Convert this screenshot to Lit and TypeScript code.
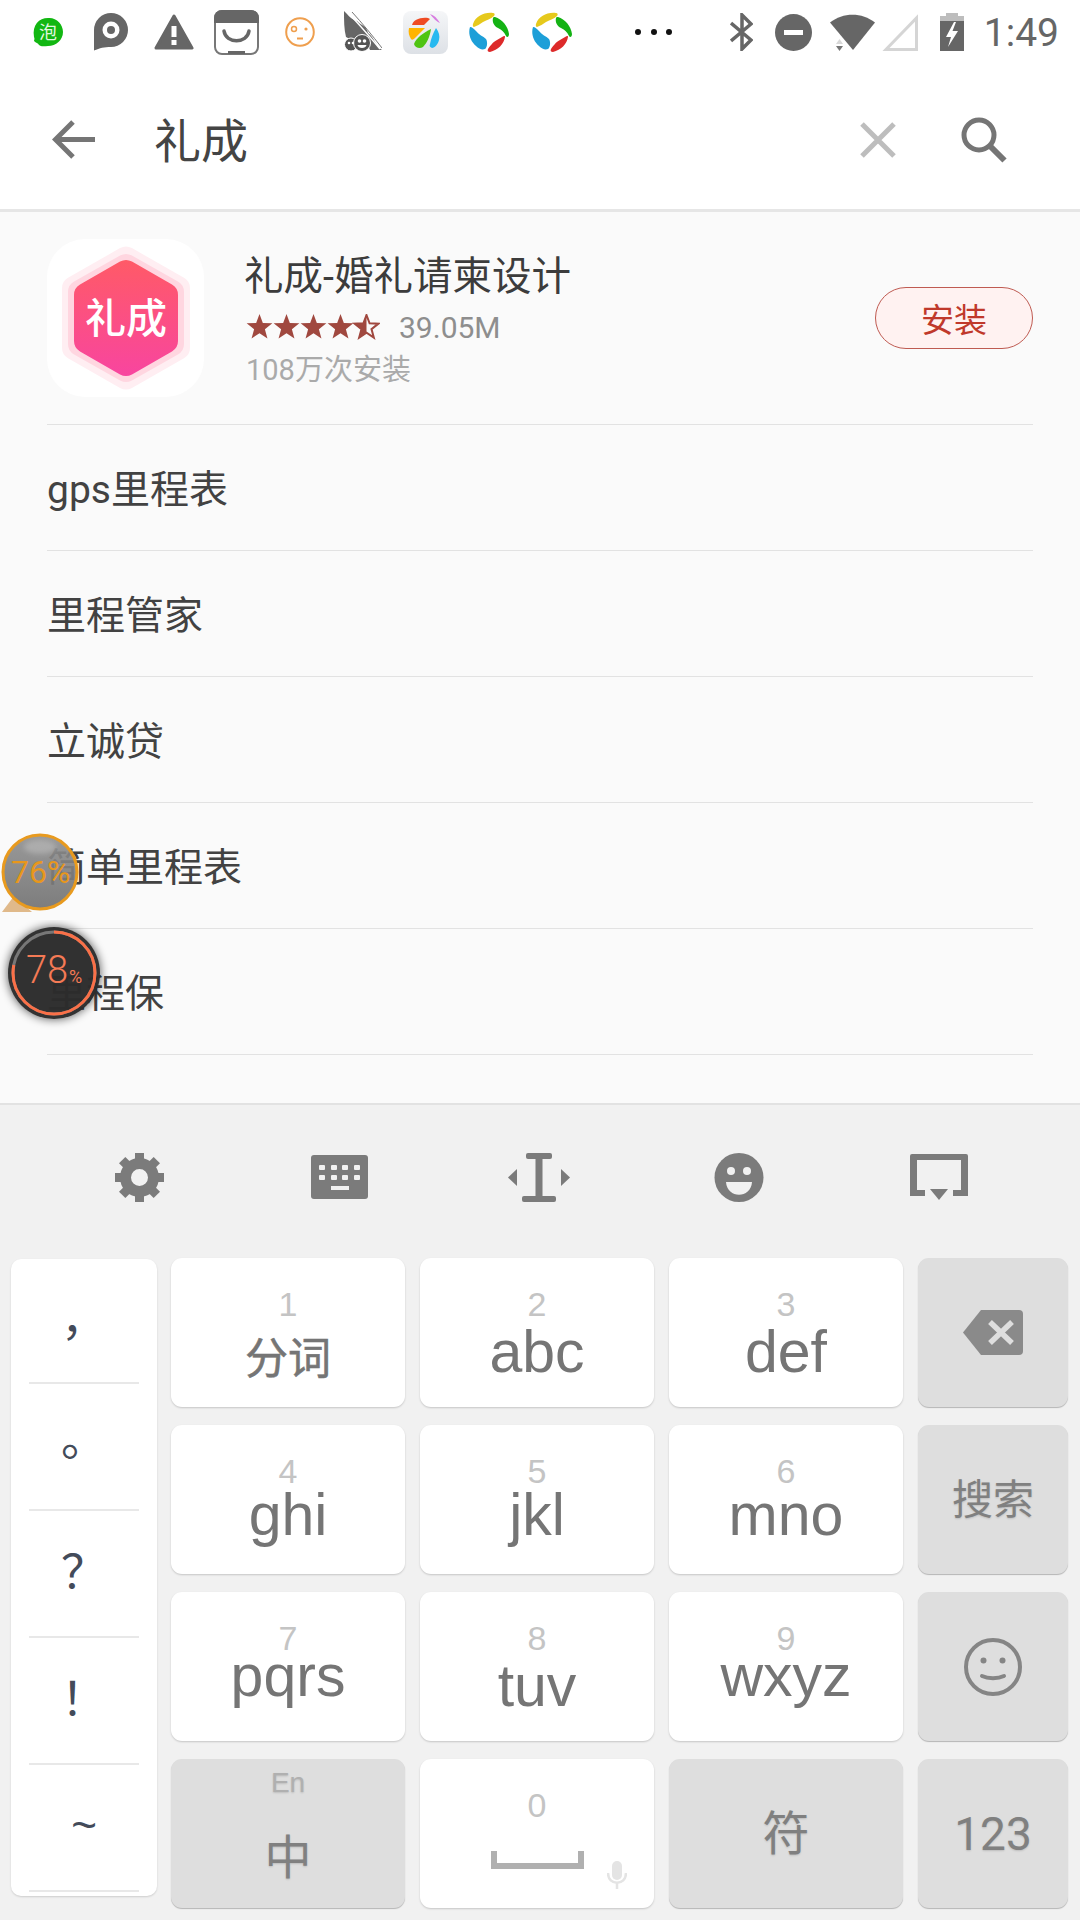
import { LitElement, html, css, svg } from 'lit';
import { customElement } from 'lit/decorators.js';

const starPoints = (cx: number, cy: number, r: number) => {
  const pts: string[] = [];
  for (let i = 0; i < 10; i++) {
    const a = -Math.PI / 2 + (i * Math.PI) / 5;
    const rad = i % 2 === 0 ? r : r * 0.42;
    pts.push(`${(cx + rad * Math.cos(a)).toFixed(2)},${(cy + rad * Math.sin(a)).toFixed(2)}`);
  }
  return pts.join(' ');
};

const rows = ['gps里程表', '里程管家', '立诚贷', '简单里程表', '里程保', '里程宝'];

const swirl = html`<svg width="40" height="40" viewBox="0 0 40 40">
  <path d="M4 12C7 4 15 0 24 1c2 0 2 2 1 3-3 3-8 4-11 6-3 2-6 4-9 5-1 0-1.500-2-1-3z" fill="#e6c91c"/>
  <path d="M26 5c7 2 13 9 14 17 0 3-2 4-3 2-2-4-4-6-8-8-4-2-6-6-5-10 0-1 1-1 2-1z" fill="#14b214"/>
  <path d="M36 25c-1 7-7 13-15 15-2 0-3-1-2-3 3-4 4-6 9-9 3-2 5-3 7-4 1 0 1 0 1 1z" fill="#dd2a2a"/>
  <path d="M1 15c2 0 4 2 6 4 3 4 7 5 10 8 2 3 1 9-1 10-3 1-6 0-9-3C1 29-1 21 1 15z" fill="#1d9fd8"/>
</svg>`;

@customElement('app-root')
export class AppRoot extends LitElement {
  static styles = css`
    :host {
      display: block;
      width: 1080px;
      height: 1920px;
      overflow: hidden;
      position: relative;
      background: #fafafa;
      font-family: Roboto, "Noto Sans CJK SC", sans-serif;
    }

    .status {
      height: 70px;
      box-sizing: border-box;
      padding: 0 21px 6px 16px;
      display: flex;
      align-items: center;
      background: #fff;
    }
    .slot {
      width: 63px;
      display: flex;
      justify-content: center;
      align-items: center;
      flex: none;
    }
    .dots {
      margin-left: 52px;
      display: flex;
      gap: 9.500px;
    }
    .dots i {
      width: 6px;
      height: 6px;
      border-radius: 50%;
      background: #111;
    }
    .sys {
      margin-left: auto;
      display: flex;
      align-items: center;
    }
    .sys svg { display: block; }
    .bt { margin-right: 22px; }
    .dnd { margin-right: 18px; }
    .wifi { margin-right: 6px; }
    .signal { margin-right: 22px; }
    .batt { margin-right: 20px; }
    .time {
      margin-top: 2px;
      font-size: 39px;
      line-height: 44px;
      color: #666;
    }

    .search {
      height: 139px;
      background: #fff;
      border-bottom: 3px solid #e6e6e6;
      display: flex;
      align-items: center;
      padding: 0 73px 0 52px;
    }
    .query {
      margin-left: 59px;
      padding-bottom: 5px;
      font-size: 47px;
      color: #444;
      flex: 1;
    }
    .clear { margin-right: 65px; }

    .list {
      height: 891px;
      overflow: hidden;
      padding: 0 47px;
    }
    .app {
      height: 213px;
      box-sizing: border-box;
      border-bottom: 1px solid #e2e2e2;
      display: flex;
      align-items: center;
    }
    .app-icon {
      width: 157px;
      height: 158px;
      border-radius: 38px;
      background: #fff;
      flex: none;
    }
    .info {
      margin-left: 40px;
      padding-top: 8px;
      display: flex;
      flex-direction: column;
    }
    .title {
      font-size: 39.500px;
      line-height: 46px;
      color: #3c3c3c;
    }
    .rating {
      margin-top: 8px;
      margin-left: 2px;
      height: 38px;
      display: flex;
      align-items: center;
    }
    .size {
      margin-left: 19px;
      font-size: 30px;
      color: #8e8e8e;
    }
    .count {
      margin-top: 4px;
      margin-left: 2px;
      font-size: 29px;
      line-height: 40px;
      color: #aaa;
    }
    .install {
      margin-left: auto;
      width: 158px;
      height: 62px;
      box-sizing: border-box;
      border: 1px solid #bf5b52;
      border-radius: 31px;
      background: #fff2f1;
      color: #c0392b;
      font-size: 33px;
      display: flex;
      align-items: center;
      justify-content: center;
    }
    .row {
      height: 126px;
      box-sizing: border-box;
      border-bottom: 1px solid #e2e2e2;
      font-size: 39px;
      color: #424242;
      display: flex;
      align-items: center;
      padding: 0 0 4px;
    }
    .row:last-child { padding: 5px 0 0; }

    .keyboard {
      height: 817px;
      box-sizing: border-box;
      border-top: 2px solid #e2e2e2;
      background: #f1f1f1;
    }
    .tools {
      height: 153px;
      box-sizing: border-box;
      padding: 0 0 9px 39px;
      display: flex;
      align-items: center;
    }
    .tool {
      width: 200px;
      display: flex;
      justify-content: center;
    }
    .keys {
      display: grid;
      grid-template-columns: 145px 234px 234px 234px 150px;
      grid-template-rows: repeat(4, 149px);
      column-gap: 15px;
      row-gap: 18px;
      padding-left: 11px;
    }
    .punct {
      grid-row: 1 / span 4;
      align-self: start;
      height: 637px;
      width: 146px;
      margin-top: 1px;
      border-radius: 10px;
      background: #fff;
      box-shadow: 0 1px 2px rgba(0, 0, 0, .15);
      display: flex;
      flex-direction: column;
      align-items: center;
    }
    .punct div {
      width: 110px;
      height: 127px;
      flex: none;
      box-sizing: border-box;
      border-bottom: 2px solid #e8e8e8;
      padding-bottom: 12px;
      display: flex;
      align-items: center;
      justify-content: center;
      font-size: 46px;
      color: #434b5a;
    }
    .punct div:first-child { height: 125px; }
    .punct .ring { padding-bottom: 24px; }
    .punct .tilde {
      padding-bottom: 6px;
      font-family: "Liberation Sans", sans-serif;
      font-size: 44px;
    }
    .key {
      position: relative;
      border-radius: 11px;
      background: #fff;
      box-shadow: 0 1px 2px rgba(0, 0, 0, .18);
      display: flex;
      flex-direction: column;
      align-items: center;
      box-sizing: border-box;
      padding-top: 29px;
      font-family: "Liberation Sans", "Noto Sans CJK SC", sans-serif;
      color: #757575;
    }
    .fn {
      background: #dedede;
      color: #808080;
      padding-top: 0;
      justify-content: center;
      box-shadow: 0 1px 1px rgba(0, 0, 0, .25);
      text-shadow: 0 1px 2px rgba(0, 0, 0, .15);
    }
    .digit {
      font-size: 34px;
      line-height: 34px;
      color: #c4c4c4;
    }
    .main {
      font-size: 59px;
      line-height: 57px;
    }
    .m3 { margin-top: 3px; }
    .m-1 { margin-top: -1px; }
    .m-7 { margin-top: -7px; }
    .cjk {
      margin-top: 17px;
      font-size: 43px;
      line-height: 42px;
      -webkit-text-stroke: .6px #757575;
    }
    .label {
      font-size: 41px;
      line-height: 44px;
    }
    .big { font-size: 47px; }
    .num {
      font-family: Roboto, sans-serif;
      font-size: 46px;
    }
    .lang {
      justify-content: flex-start;
      padding-top: 10px;
    }
    .en {
      font-size: 28px;
      line-height: 28px;
      color: #b0b0b0;
    }
    .zh {
      margin-top: 39px;
      font-size: 47px;
      line-height: 44px;
    }
    .space {
      margin-top: 29px;
      width: 93px;
      height: 18px;
      box-sizing: border-box;
      border: 6px solid #b0b0b0;
      border-top: 0;
    }
    .mic {
      position: absolute;
      right: 27px;
      bottom: 19px;
    }
    .float {
      position: absolute;
      left: 0;
    }
    .f76 { top: 830px; }
    .f78 { top: 920px; }
  `;

  render() {
    return html`
      <div class="status">
        <div class="slot">
          <svg width="32" height="30" viewBox="0 0 32 30">
            <path d="M16 1c8-1 15 6 15 14 0 8-7 14-15 14-3 0-7 1-9-1-1-2-3-2-5-4 0-1 1-2 0-4C0 8 7 1 16 1z" fill="#12b712"/>
            <text x="16" y="22" font-size="18" fill="#dff7df" text-anchor="middle" font-family="Noto Sans CJK SC">泡</text>
          </svg>
        </div>
        <div class="slot">
          <svg width="34" height="38" viewBox="0 0 34 38">
            <path d="M0 37.500V17A17 17 0 1 1 17 34C10 34 6 35 0 37.500Z" fill="#666"/>
            <circle cx="17" cy="17" r="8.500" fill="#fff"/>
            <circle cx="17" cy="17" r="4" fill="#666"/>
          </svg>
        </div>
        <div class="slot">
          <svg width="40" height="36" viewBox="0 0 40 36">
            <path d="M20 2L38 34H2Z" fill="#666" stroke="#666" stroke-width="3" stroke-linejoin="round"/>
            <rect x="17.500" y="12" width="5" height="11" fill="#fff"/>
            <rect x="17.500" y="26" width="5" height="5" fill="#fff"/>
          </svg>
        </div>
        <div class="slot">
          <svg width="45" height="45" viewBox="0 0 45 45">
            <rect x="1" y="1" width="43" height="43" rx="7" fill="#fff" stroke="#777" stroke-width="2"/>
            <path d="M8 0H37A8 8 0 0 1 45 8V13H0V8A8 8 0 0 1 8 0Z" fill="#666"/>
            <path d="M10 21C12 34 33 34 35 21" fill="none" stroke="#666" stroke-width="3.500" stroke-linecap="round"/>
            <rect x="14" y="41" width="17" height="3" fill="#666"/>
          </svg>
        </div>
        <div class="slot">
          <svg width="30" height="30" viewBox="0 0 30 30" fill="none" stroke="#ef9f4e">
            <circle cx="15" cy="15" r="13.800" stroke-width="2"/>
            <circle cx="9" cy="12" r="2.500" stroke-width="1.500"/>
            <circle cx="21" cy="12" r="1.600" fill="#ef9f4e" stroke="none"/>
            <path d="M12 21.500H18" stroke-width="2"/>
          </svg>
        </div>
        <div class="slot">
          <svg width="38" height="42" viewBox="0 0 38 42">
            <path d="M0 0C0 10 0 18 2 26L8 29H22L26 39H38C32 36 30 26 24 22 22 14 16 14 13 10 8 9 4 4 0 0Z" fill="#666"/>
            <path d="M5 3C16 14 26 26 36 38" fill="none" stroke="#fff" stroke-width="1.500"/>
            <path d="M8 1C18 12 28 24 38 37" fill="none" stroke="#777" stroke-width="1"/>
            <circle cx="7" cy="33.500" r="6.500" fill="#555" stroke="#fff" stroke-width="1"/>
            <circle cx="18" cy="32" r="8.500" fill="#555" stroke="#fff" stroke-width="1"/>
            <circle cx="5" cy="32" r="1.300" fill="#fff"/>
            <circle cx="9" cy="32" r="1.300" fill="#fff"/>
            <circle cx="15.500" cy="30" r="1.800" fill="#fff"/>
            <circle cx="20.500" cy="30" r="1.800" fill="#fff"/>
            <path d="M13.500 34H22.500C22 38 14 38 13.500 34Z" fill="#fff"/>
          </svg>
        </div>
        <div class="slot">
          <svg width="45" height="43" viewBox="0 0 45 43">
            <defs>
              <linearGradient id="tile" x1="0" y1="0" x2="0" y2="1">
                <stop offset="0" stop-color="#f5f6f8"/>
                <stop offset="1" stop-color="#dde1e6"/>
              </linearGradient>
            </defs>
            <rect width="45" height="43" rx="8" fill="url(#tile)"/>
            <path d="M27 3c4 1 7 4 10 9-3-1-7-5-10-9z" fill="#d77de0"/>
            <path d="M9 14c1-5 8-8 16-7l2 1-6 6z" fill="#ef4b23"/>
            <path d="M6 17h16L12 27c-2 2-3 2-4 1-2-3-3-7-2-11z" fill="#ffb400"/>
            <path d="M11 33c2-6 9-11 17-15-1 7-4 14-8 18-3 2-8 1-9-3z" fill="#4fc412"/>
            <path d="M33 17c3 4 4 8 3 12-1 4-4 8-7 8-2-1-3-2-2-4 1-5 3-11 6-16z" fill="#27b9f0"/>
          </svg>
        </div>
        <div class="slot">${swirl}</div>
        <div class="slot">${swirl}</div>
        <div class="dots"><i></i><i></i><i></i></div>
        <div class="sys">
          <svg class="bt" width="23" height="38" viewBox="0 0 23 38" fill="none" stroke="#666" stroke-width="3.500">
            <path d="M1 10L21 27 12 36V2L21 11 1 28"/>
          </svg>
          <svg class="dnd" width="37" height="37" viewBox="0 0 37 37">
            <circle cx="18.500" cy="18.500" r="18.500" fill="#666"/>
            <rect x="9" y="16" width="19" height="5" fill="#fff"/>
          </svg>
          <svg class="wifi" width="46" height="37" viewBox="0 0 46 37">
            <path d="M0 8.500C13 -2 32 -2 45 8.500L23 36Z" fill="#666"/>
            <path d="M6 30L9.500 25 13 30Z" fill="#d8d8d8"/>
            <path d="M6 32H13L9.500 37Z" fill="#777"/>
          </svg>
          <svg class="signal" width="36" height="37" viewBox="0 0 36 37">
            <path d="M34.500 4V35.500H4Z" fill="none" stroke="#d5d5d5" stroke-width="3"/>
          </svg>
          <svg class="batt" width="24" height="38" viewBox="0 0 24 38">
            <rect x="6" y="0" width="12" height="4" fill="#bdbdbd"/>
            <rect x="0" y="3" width="24" height="6" fill="#bdbdbd"/>
            <rect x="0" y="8" width="24" height="30" fill="#666"/>
            <path d="M14 9L6 24H11L8 34 18 18H12.500L16 9Z" fill="#fff"/>
          </svg>
          <span class="time">1:49</span>
        </div>
      </div>

      <div class="search">
        <svg width="43" height="39" viewBox="0 0 43 39" fill="none" stroke="#757575" stroke-width="5">
          <path d="M43 19.500H4M21 2L3.500 19.500 21 37"/>
        </svg>
        <div class="query">礼成</div>
        <svg class="clear" width="36" height="36" viewBox="0 0 36 36" stroke="#bdbdbd" stroke-width="5">
          <path d="M2 2L34 34M34 2L2 34"/>
        </svg>
        <svg width="46" height="46" viewBox="0 0 46 46" fill="none" stroke="#757575">
          <circle cx="18" cy="18" r="15" stroke-width="5"/>
          <path d="M29 29L43.500 43.500" stroke-width="6"/>
        </svg>
      </div>

      <div class="list">
        <div class="app">
          <div class="app-icon">
            <svg width="157" height="158" viewBox="0 0 157 158">
              <defs>
                <linearGradient id="hex" gradientUnits="userSpaceOnUse" x1="0" y1="21" x2="0" y2="137">
                  <stop offset="0" stop-color="#ff5a67"/>
                  <stop offset="1" stop-color="#f8459f"/>
                </linearGradient>
              </defs>
              <path d="M79 19.500L131 49.250V108.750L79 138.500 27 108.750V49.250Z" fill="#ffeef2" stroke="#ffeef2" stroke-width="24" stroke-linejoin="round"/>
              <path d="M79 27L125 53V105L79 131 33 105V53Z" fill="#ffd6e0" stroke="#ffd6e0" stroke-width="24" stroke-linejoin="round"/>
              <path d="M79 33L119 56V102L79 125 39 102V56Z" fill="url(#hex)" stroke="url(#hex)" stroke-width="24" stroke-linejoin="round"/>
              <text x="79" y="94" font-size="41" font-weight="500" fill="#fff" text-anchor="middle" font-family="Noto Sans CJK SC">礼成</text>
            </svg>
          </div>
          <div class="info">
            <div class="title">礼成-婚礼请柬设计</div>
            <div class="rating">
              <svg width="134" height="26" viewBox="0 0 134 26">
                <defs><clipPath id="half"><rect x="107" y="0" width="13.500" height="26"/></clipPath></defs>
                ${[13.5, 40.5, 67.5, 94.5].map(
                  (cx) => svg`<polygon points=${starPoints(cx, 13.5, 13.5)} fill="#a0483f"/>`
                )}
                <polygon points=${starPoints(120.5, 13.5, 12.5)} fill="none" stroke="#a0483f" stroke-width="2"/>
                <polygon points=${starPoints(120.5, 13.5, 13.5)} fill="#a0483f" clip-path="url(#half)"/>
              </svg>
              <span class="size">39.05M</span>
            </div>
            <div class="count">108万次安装</div>
          </div>
          <div class="install">安装</div>
        </div>
        ${rows.map((r) => html`<div class="row">${r}</div>`)}
      </div>

      <div class="keyboard">
        <div class="tools">
          <div class="tool">
            <svg width="49" height="49" viewBox="0 0 49 49" fill="#7b7b7b">
              ${[0, 45, 90, 135, 180, 225, 270, 315].map(
                (a) => svg`<rect x="20" y="0" width="9" height="12" transform="rotate(${a} 24.5 24.5)"/>`
              )}
              <circle cx="24.500" cy="24.500" r="14" fill="none" stroke="#7b7b7b" stroke-width="11"/>
            </svg>
          </div>
          <div class="tool">
            <svg width="57" height="44" viewBox="0 0 57 44">
              <rect width="57" height="44" rx="3" fill="#7b7b7b"/>
              <g fill="#f1f1f1">
                ${[8, 20, 31, 43].map(
                  (x) => svg`<rect x=${x} y="10" width="6" height="5" rx="1"/><rect x=${x} y="20" width="6" height="5" rx="1"/>`
                )}
                <rect x="20" y="31" width="18" height="4"/>
              </g>
            </svg>
          </div>
          <div class="tool">
            <svg width="62" height="49" viewBox="0 0 62 49" fill="#7b7b7b">
              <rect x="18" y="0" width="26" height="6" rx="2"/>
              <rect x="27.500" y="4" width="7" height="42"/>
              <rect x="14" y="43" width="34" height="6" rx="2"/>
              <path d="M0 24.500L9 16V33Z"/>
              <path d="M62 24.500L53 16V33Z"/>
            </svg>
          </div>
          <div class="tool">
            <svg width="50" height="49" viewBox="0 0 50 49">
              <circle cx="25" cy="24.500" r="24.500" fill="#7b7b7b"/>
              <circle cx="17" cy="18" r="4" fill="#f1f1f1"/>
              <circle cx="33" cy="18" r="4" fill="#f1f1f1"/>
              <path d="M12 29H38C37 46 13 46 12 29Z" fill="#f1f1f1"/>
            </svg>
          </div>
          <div class="tool">
            <svg width="58" height="46" viewBox="0 0 58 46" fill="#7b7b7b">
              <path d="M2 0H56A2 2 0 0 1 58 2V42H43V36H51V6H7V36H15V42H0V2A2 2 0 0 1 2 0Z"/>
              <path d="M20 35H38L29 46Z"/>
            </svg>
          </div>
        </div>

        <div class="keys">
          <div class="punct">
            <div>，</div>
            <div class="ring">。</div>
            <div>？</div>
            <div>！</div>
            <div class="tilde">~</div>
          </div>

          <div class="key"><span class="digit">1</span><span class="cjk">分词</span></div>
          <div class="key"><span class="digit">2</span><span class="main m3">abc</span></div>
          <div class="key"><span class="digit">3</span><span class="main m3">def</span></div>
          <div class="key fn">
            <svg width="60" height="45" viewBox="0 0 60 45">
              <path d="M18 0H56A4 4 0 0 1 60 4V41A4 4 0 0 1 56 45H18L0 22.500Z" fill="#8a8a8a"/>
              <path d="M27 12L49 33M49 12L27 33" stroke="#dedede" stroke-width="5.500"/>
            </svg>
          </div>

          <div class="key"><span class="digit">4</span><span class="main m-1">ghi</span></div>
          <div class="key"><span class="digit">5</span><span class="main m-1">jkl</span></div>
          <div class="key"><span class="digit">6</span><span class="main m-1">mno</span></div>
          <div class="key fn"><span class="label">搜索</span></div>

          <div class="key"><span class="digit">7</span><span class="main m-7">pqrs</span></div>
          <div class="key"><span class="digit">8</span><span class="main m3">tuv</span></div>
          <div class="key"><span class="digit">9</span><span class="main m-7">wxyz</span></div>
          <div class="key fn">
            <svg width="58" height="58" viewBox="0 0 58 58" fill="none" stroke="#858585">
              <circle cx="29" cy="29" r="27" stroke-width="4"/>
              <circle cx="19.500" cy="22.500" r="3" fill="#858585" stroke="none"/>
              <circle cx="38.500" cy="22.500" r="3" fill="#858585" stroke="none"/>
              <path d="M18 38C24 41 34 41 40 38" stroke-width="4" stroke-linecap="round"/>
            </svg>
          </div>

          <div class="key fn lang"><span class="en">En</span><span class="zh">中</span></div>
          <div class="key">
            <span class="digit">0</span>
            <div class="space"></div>
            <svg class="mic" width="20" height="28" viewBox="0 0 20 28" fill="none" stroke="#e4e4e4">
              <rect x="5" y="0" width="10" height="19" rx="5" fill="#e4e4e4" stroke="none"/>
              <path d="M1 12C1 25 19 25 19 12M10 21V28" stroke-width="2.500"/>
            </svg>
          </div>
          <div class="key fn"><span class="label big">符</span></div>
          <div class="key fn"><span class="label num">123</span></div>
        </div>
      </div>

      <svg class="float f76" width="82" height="86" viewBox="0 0 82 86">
        <defs>
          <linearGradient id="ball" x1="0" y1="0" x2="0" y2="1">
            <stop offset="0" stop-color="#8f8f8f"/>
            <stop offset="1" stop-color="#6f6f6f"/>
          </linearGradient>
          <filter id="gloss" x="-30%" y="-50%" width="160%" height="200%">
            <feGaussianBlur stdDeviation="2.500"/>
          </filter>
        </defs>
        <path d="M2 82L14 66 32 82Z" fill="#e0b98a"/>
        <circle cx="40" cy="42" r="37" fill="url(#ball)" fill-opacity=".9" stroke="#e89a1e" stroke-width="3"/>
        <ellipse cx="40" cy="17" rx="16" ry="7" fill="#fff" fill-opacity=".22" filter="url(#gloss)"/>
        <text x="11" y="53" font-size="32" fill="#e8971c" font-family="Roboto">76%</text>
      </svg>

      <svg class="float f78" width="110" height="110" viewBox="0 0 110 110">
        <defs>
          <filter id="soft" x="-20%" y="-20%" width="140%" height="140%">
            <feGaussianBlur stdDeviation="4"/>
          </filter>
        </defs>
        <circle cx="54" cy="53" r="47" fill="#000" fill-opacity=".55" filter="url(#soft)"/>
        <circle cx="54" cy="53" r="46" fill="#2d2d2d" fill-opacity=".95"/>
        <circle cx="54" cy="53" r="41" fill="none" stroke="#777" stroke-width="3"/>
        <circle cx="54" cy="53" r="41" fill="none" stroke="#fa7048" stroke-width="3" stroke-dasharray="201 258" transform="rotate(-90 54 53)"/>
        <text x="26" y="63" font-size="38" font-weight="300" fill="#f47a55" font-family="Roboto">78</text>
        <text x="69" y="63" font-size="18" fill="#f47a55" font-family="Roboto">%</text>
      </svg>
    `;
  }
}
